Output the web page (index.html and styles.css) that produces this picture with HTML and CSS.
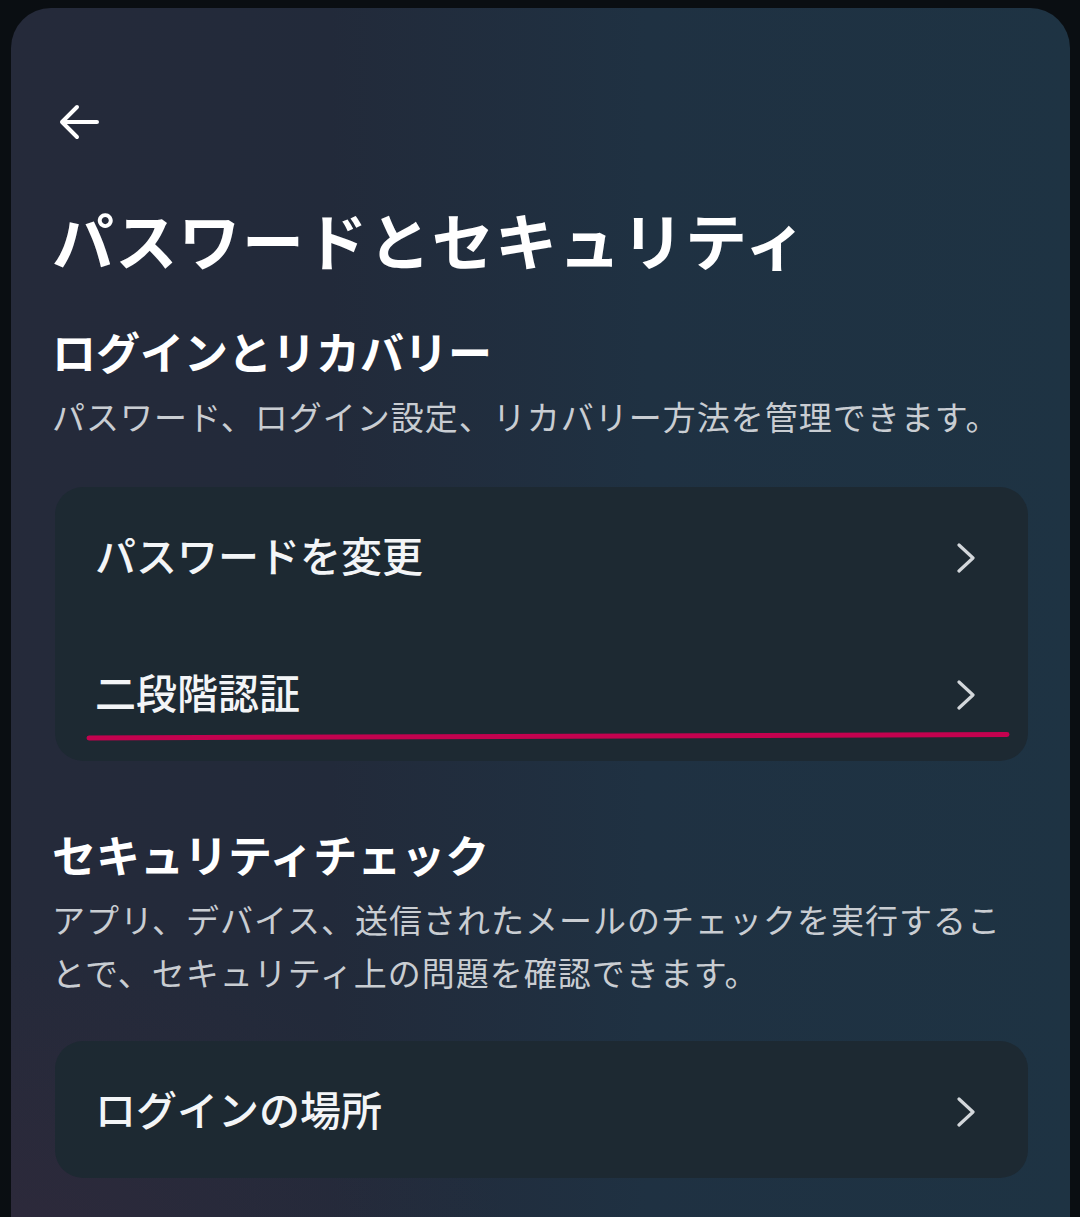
FILE: index.html
```html
<!DOCTYPE html>
<html lang="ja">
<head>
  <meta charset="UTF-8">
  <meta name="viewport" content="width=device-width, initial-scale=1.0">
  <link rel="stylesheet" href="styles.css">
</head>
<body>

  <div class="screen">
    <button class="back" aria-label="戻る">
      <svg viewBox="0 0 44 44" width="44" height="44">
        <path d="M40 22H5M20 7L5 22l15 15" fill="none" stroke="#fff" stroke-width="4" stroke-linecap="round" stroke-linejoin="round"/>
      </svg>
    </button>

    <h1 class="title">パスワードとセキュリティ</h1>

    <section class="section">
      <h2 class="section-title">ログインとリカバリー</h2>
      <p class="section-desc">パスワード、ログイン設定、リカバリー方法を管理できます。</p>
      <div class="card">
        <a class="row" href="#">
          <span>パスワードを変更</span>
          <svg class="chevron" viewBox="0 0 20 30" width="20" height="30">
            <path d="M3 2l14 13L3 28" fill="none" stroke="#d3d7db" stroke-width="3.2" stroke-linecap="round" stroke-linejoin="round"/>
          </svg>
        </a>
        <a class="row" href="#">
          <span>二段階認証</span>
          <svg class="chevron" viewBox="0 0 20 30" width="20" height="30">
            <path d="M3 2l14 13L3 28" fill="none" stroke="#d3d7db" stroke-width="3.2" stroke-linecap="round" stroke-linejoin="round"/>
          </svg>
        </a>
        <!-- hand drawn highlight -->
        <svg class="mark" viewBox="0 0 924 10" width="924" height="10">
          <path d="M3 7L921 3.5" fill="none" stroke="#c4024f" stroke-width="5" stroke-linecap="round"/>
        </svg>
      </div>
    </section>

    <section class="section">
      <h2 class="section-title second">セキュリティチェック</h2>
      <p class="section-desc">アプリ、デバイス、送信されたメールのチェックを実行することで、セキュリティ上の問題を確認できます。</p>
      <div class="card">
        <a class="row" href="#">
          <span>ログインの場所</span>
          <svg class="chevron" viewBox="0 0 20 30" width="20" height="30">
            <path d="M3 2l14 13L3 28" fill="none" stroke="#d3d7db" stroke-width="3.2" stroke-linecap="round" stroke-linejoin="round"/>
          </svg>
        </a>
      </div>
    </section>
  </div>

</body>
</html>
```

FILE: styles.css
```css
* {
  margin: 0;
  padding: 0;
  box-sizing: border-box;
}

html, body {
  height: 100%;
}

body {
  font-family: 'Noto Sans CJK JP', 'Noto Sans', sans-serif;
  background-color: #0a0e12;
  padding: 8px 10px 0 11px;
  overflow: hidden;
}

.screen {
  min-height: 1240px;
  border-radius: 40px 40px 0 0;
  background:
    radial-gradient(ellipse 500px 300px at 0% 100%, rgba(60, 40, 60, 0.35), transparent),
    linear-gradient(90deg, #252a3a 0%, #222a3a 30%, #1f3142 60%, #1e3343 100%);
  padding: 92px 42px 0 41px;
  color: #fff;
}

.back {
  display: block;
  width: 44px;
  height: 44px;
  border: none;
  background: none;
  margin-left: 5px;
  cursor: pointer;
}

.title {
  font-size: 62px;
  font-weight: 700;
  line-height: 80px;
  margin-top: 55px;
  letter-spacing: 1.3px;
}

.section-title {
  font-size: 44px;
  font-weight: 700;
  line-height: 60px;
  margin-top: 42px;
}

.section-title.second {
  margin-top: 63px;
}

.section-desc {
  font-size: 33px;
  font-weight: 400;
  line-height: 53px;
  letter-spacing: 1px;
  color: #c9cdd2;
  margin-top: 9px;
  max-width: 965px;
}

.card {
  position: relative;
  margin: 44px 0 0 3px;
  background-color: #1d2932;
  border-radius: 28px;
}

.section-title.second + .section-desc + .card {
  margin-top: 42px;
}

.row {
  display: flex;
  align-items: center;
  justify-content: space-between;
  height: 137px;
  padding: 0 52px 4px 40px;
  color: #f3f5f7;
  text-decoration: none;
  font-size: 41px;
  font-weight: 500;
}

.chevron {
  flex-shrink: 0;
  margin-top: 8px;
}

.mark {
  position: absolute;
  left: 31px;
  top: 244px;
}
```
